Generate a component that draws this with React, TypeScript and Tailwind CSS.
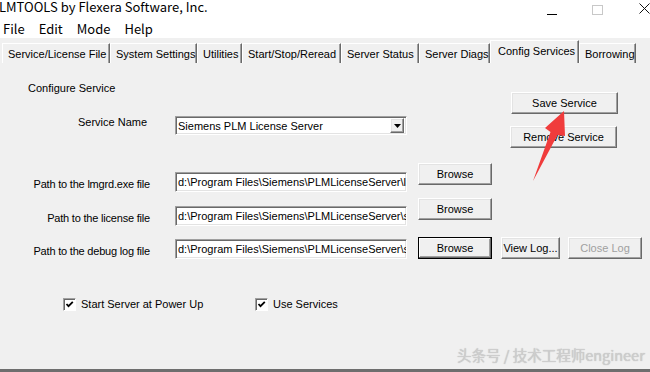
import React from 'react';

const tabs = [
  { label: 'Service/License File', w: 'w-[108px]' },
  { label: 'System Settings', w: 'w-[87px]' },
  { label: 'Utilities', w: 'w-[45px]' },
  { label: 'Start/Stop/Reread', w: 'w-[99px]' },
  { label: 'Server Status', w: 'w-[78px]' },
  { label: 'Server Diags', w: 'w-[71px]' },
  { label: 'Config Services', w: 'w-[89px]', active: true },
  { label: 'Borrowing', w: 'w-[57px]' },
];

const raised =
  'border border-t-white border-l-white border-r-[#696969] border-b-[#696969] shadow-[inset_-1px_-1px_0_#a0a0a0,inset_1px_1px_0_#e3e3e3] bg-[#f0f0f0]';

function Button({
  children,
  className = '',
  disabled = false,
  isDefault = false,
}: {
  children: React.ReactNode;
  className?: string;
  disabled?: boolean;
  isDefault?: boolean;
}) {
  return (
    <div
      className={`flex items-center justify-center text-[11px] leading-none ${
        isDefault
          ? 'border border-black bg-[#f0f0f0] shadow-[inset_-1px_-1px_0_#696969,inset_1px_1px_0_#ffffff,inset_-2px_-2px_0_#a0a0a0]'
          : raised
      } ${disabled ? 'text-[#a0a0a0]' : 'text-black'} ${className}`}
    >
      {children}
    </div>
  );
}

function TextBox({ value, className = '' }: { value: string; className?: string }) {
  return (
    <div
      className={`w-[232px] h-[20px] bg-white border border-t-[#a0a0a0] border-l-[#a0a0a0] border-r-white border-b-white shadow-[inset_1px_1px_0_#696969,inset_-1px_-1px_0_#e3e3e3] overflow-hidden whitespace-nowrap text-[11px] leading-[18px] pl-[2px] ${className}`}
    >
      {value}
    </div>
  );
}

function Checkbox() {
  return (
    <div className="w-[13px] h-[13px] bg-white border border-t-[#a0a0a0] border-l-[#a0a0a0] border-r-white border-b-white shadow-[inset_1px_1px_0_#696969] flex items-center justify-center">
      <svg width="9" height="9" viewBox="0 0 9 9">
        <path d="M1.5 4 L3.5 6.2 L7.8 1.8" fill="none" stroke="#000" strokeWidth="1.8" />
      </svg>
    </div>
  );
}

export default function App() {
  return (
    <div className="relative w-[650px] h-[372px] overflow-hidden flex flex-col bg-[#f0f0f0] font-['Liberation_Sans',Arial,sans-serif] text-black">
      {/* title bar */}
      <div className="h-[20px] bg-white flex items-start font-['Noto_Sans_CJK_SC',sans-serif]">
        <div className="text-[13px] leading-[14px] -ml-[1px]">LMTOOLS by Flexera Software, Inc.</div>
        <div className="ml-auto flex items-start">
          <div className="w-[10px] h-px bg-black mt-[14px]" />
          <div className="w-[11px] h-[10px] border border-[#c8c8c8] mt-[5px] ml-[35px]" />
          <svg className="ml-[36px] mt-[3px]" width="11" height="11" viewBox="0 0 11 11">
            <path d="M0.5 0.5 L10.5 10.5 M10.5 0.5 L0.5 10.5" stroke="#111" strokeWidth="1" />
          </svg>
        </div>
      </div>

      {/* menu bar */}
      <div className="h-[18px] bg-white flex items-center gap-[14px] pl-[3px] text-[13px] font-['Noto_Sans_CJK_SC',sans-serif]">
        <span>File</span>
        <span>Edit</span>
        <span>Mode</span>
        <span>Help</span>
      </div>

      {/* tab strip */}
      <div className="h-[25px] flex items-end pl-[2px] text-[11px]">
        {tabs.map((t) =>
          t.active ? (
            <div
              key={t.label}
              className={`${t.w} h-[23px] border-t border-l border-t-white border-l-white border-r border-r-[#696969] shadow-[inset_-1px_0_0_#a0a0a0] pl-[7px] pt-[3px] leading-[14px]`}
            >
              {t.label}
            </div>
          ) : (
            <div
              key={t.label}
              className={`${t.w} h-[20px] border-t border-l border-t-white border-l-white border-r border-r-[#696969] shadow-[inset_-1px_0_0_#a0a0a0] pl-[5px] pt-[3px] leading-[14px]`}
            >
              {t.label}
            </div>
          )
        )}
      </div>

      {/* body */}
      <div className="flex-1 flex flex-col text-[11px]">
        <div className="flex h-[85px]">
          <div className="w-[510px] pl-[28px] pt-[18px]">
            <div className="leading-[14px]">Configure Service</div>
            <div className="flex items-start mt-[21px]">
              <div className="w-[147px] pl-[50px] -mt-[1px] leading-[14px]">Service Name</div>
              <div className="w-[232px] h-[19px] bg-white border border-t-[#a0a0a0] border-l-[#a0a0a0] border-r-white border-b-white shadow-[inset_1px_1px_0_#696969,inset_-1px_-1px_0_#e3e3e3] flex items-center pl-[2px] pr-[2px]">
                <span className="flex-1 leading-[14px]">Siemens PLM License Server</span>
                <div className={`w-[14px] h-[15px] ${raised} flex items-center justify-center`}>
                  <svg width="7" height="4" viewBox="0 0 7 4">
                    <path d="M0 0 H7 L3.5 4 Z" fill="#000" />
                  </svg>
                </div>
              </div>
            </div>
          </div>
          <div className="flex flex-col pt-[29px] gap-[12px]">
            <Button className="w-[107px] h-[22px] ml-[1px]">Save Service</Button>
            <Button className="w-[107px] h-[22px]">Remove Service</Button>
          </div>
        </div>

        {/* path rows */}
        <div className="flex items-start mt-[15px] h-[29px]">
          <div className="w-[150px] text-right mt-[14px] leading-[14px] tracking-[-0.2px]">Path to the lmgrd.exe file</div>
          <TextBox className="ml-[25px] mt-[9px]" value="d:\Program Files\Siemens\PLMLicenseServer\lmgrd.exe" />
          <Button className="ml-[11px] w-[74px] h-[22px]">Browse</Button>
        </div>
        <div className="flex items-start mt-[6px] h-[28px]">
          <div className="w-[150px] text-right mt-[13px] leading-[14px] tracking-[-0.2px]">Path to the license file</div>
          <TextBox className="ml-[25px] mt-[8px]" value="d:\Program Files\Siemens\PLMLicenseServer\splm8.lic" />
          <Button className="ml-[11px] w-[74px] h-[22px]">Browse</Button>
        </div>
        <div className="flex items-start mt-[11px] h-[22px]">
          <div className="w-[150px] text-right mt-[7px] leading-[14px] tracking-[-0.2px]">Path to the debug log file</div>
          <TextBox className="ml-[25px] mt-[2px]" value="d:\Program Files\Siemens\PLMLicenseServer\splm_ugslmd.log" />
          <Button isDefault className="ml-[11px] w-[74px] h-[22px]">Browse</Button>
          <Button className="ml-[9px] w-[59px] h-[22px]">View Log...</Button>
          <Button disabled className="ml-[8px] w-[74px] h-[22px]">Close Log</Button>
        </div>

        {/* checkboxes */}
        <div className="flex items-center mt-[38px] pl-[63px]">
          <div className="w-[192px] flex items-center gap-[5px]">
            <Checkbox />
            <span className="leading-[14px]">Start Server at Power Up</span>
          </div>
          <div className="flex items-center gap-[5px]">
            <Checkbox />
            <span className="leading-[14px]">Use Services</span>
          </div>
        </div>
      </div>

      <div className="h-[3px] bg-[#6e6e6e]" />

      {/* watermark */}
      <div className="absolute left-[457px] top-[345px] text-[14.5px] leading-[20px] text-[#cdcdcd] font-['Noto_Sans_CJK_SC',sans-serif] [text-shadow:0_0_1px_#b5b5b5] whitespace-nowrap">
        头条号 / 技术工程师engineer
      </div>

      {/* red annotation arrow */}
      <svg className="absolute left-0 top-0 pointer-events-none" width="650" height="372">
        <polygon
          points="564,111 565,136 557.5,135 533,181 550.5,132 545,128"
          fill="#f03c3c"
        />
      </svg>
    </div>
  );
}
